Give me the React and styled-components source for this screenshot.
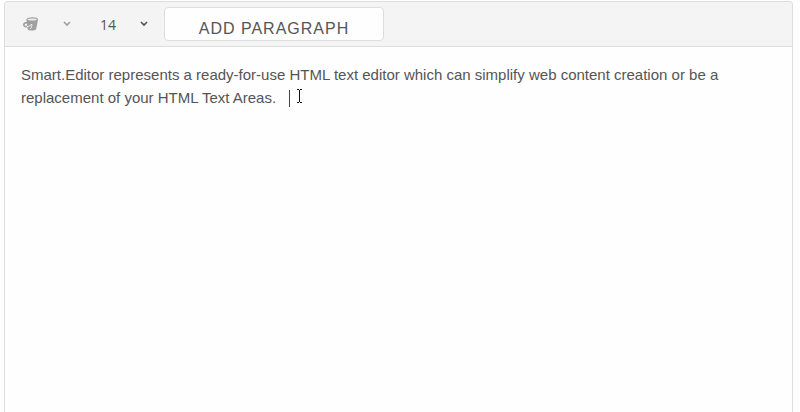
import { useState } from "react";
import styled, { createGlobalStyle } from "styled-components";

const GlobalStyles = createGlobalStyle`
  *,
  *::before,
  *::after {
    box-sizing: border-box;
    margin: 0;
  }

  body {
    background-color: #fefefe;
    color: #555;
    font-family: "Liberation Sans", Arial, sans-serif;
    font-size: 16px;
  }
`;

const Page = styled.main`
  display: flex;
  height: 100vh;
  padding: 1px 7px 0 4px;
`;

const Editor = styled.section`
  display: flex;
  flex-direction: column;
  flex: 1;
  border: 1px solid #ddd;
  border-bottom: none;
  border-radius: 4px 4px 0 0;
  overflow: hidden;
`;

const Toolbar = styled.div`
  display: flex;
  align-items: center;
  padding: 5px 16px;
  background-color: #f4f4f4;
  border-bottom: 1px solid #ddd;
`;

const ColorButton = styled.button`
  display: flex;
  align-items: center;
  justify-content: space-between;
  width: 52px;
  height: 34px;
  padding: 0 2px;
  border: none;
  background: none;
  color: #a0a0a0;
  cursor: pointer;
`;

const SizePicker = styled.label`
  display: flex;
  align-items: center;
  width: 50px;
  margin: 0 16px 0 25px;
  color: #555;
`;

const SizeSelect = styled.select`
  appearance: none;
  flex: 1;
  min-width: 0;
  height: 34px;
  padding: 0 2px;
  border: none;
  background: none;
  color: inherit;
  font-family: "Open Sans", sans-serif;
  font-size: 14px;
`;

const ParagraphButton = styled.button`
  width: 220px;
  height: 34px;
  padding: 9px 0 0;
  border: 1px solid #ddd;
  border-radius: 4px;
  background-color: #fefefe;
  color: #555;
  font-family: inherit;
  font-size: 16px;
  letter-spacing: 1px;
  text-transform: uppercase;
  cursor: pointer;
`;

const Content = styled.div`
  position: relative;
  display: flex;
  flex: 1;
`;

const TextArea = styled.textarea`
  flex: 1;
  padding: 16px;
  border: none;
  outline: none;
  resize: none;
  background: none;
  color: #555;
  font-family: inherit;
  font-size: 15px;
  line-height: 23px;
`;

const Caret = styled.span`
  position: absolute;
  top: 43px;
  left: 284px;
  width: 1px;
  height: 17px;
  background-color: #444;
`;

const Pointer = styled.svg`
  position: absolute;
  top: 42px;
  left: 291px;
  pointer-events: none;
`;

function PaintIcon() {
  return (
    <svg width="16" height="14" viewBox="0 0 16 14" aria-hidden="true">
      <path
        d="M3.500 2.500 4.500 12c1 2 7.500 2 8.700 0L15 2.500Z"
        fill="currentColor"
      />
      <ellipse
        cx="9.300"
        cy="2.500"
        rx="5.200"
        ry="1.600"
        fill="#ededed"
        stroke="currentColor"
        strokeWidth="1.200"
      />
      <path
        d="M4.500 5.700C1.500 5.500.5 7 1 8.500c.7 1.900 4.500 1.200 7-1.500"
        fill="none"
        stroke="currentColor"
        strokeWidth="1.700"
      />
      <path
        d="M4 9.600c2 0 3.500-1 4.700-2.600.4 2.200-.2 3.700-1.500 4.800"
        fill="none"
        stroke="#f4f4f4"
        strokeWidth="1"
      />
    </svg>
  );
}

function ChevronIcon() {
  return (
    <svg width="8" height="6" viewBox="0 0 8 6" aria-hidden="true">
      <path
        d="M1 1 4 4 7 1"
        fill="none"
        stroke="currentColor"
        strokeWidth="1.700"
      />
    </svg>
  );
}

const sizes = ["10", "12", "14", "16", "18", "24"];

function App() {
  const [size, setSize] = useState("14");
  const [text, setText] = useState(
    "Smart.Editor represents a ready-for-use HTML text editor which can simplify web content creation or be a replacement of your HTML Text Areas. "
  );

  return (
    <Page>
      <GlobalStyles />
      <Editor>
        <Toolbar role="toolbar">
          <ColorButton type="button" aria-label="Background color">
            <PaintIcon />
            <ChevronIcon />
          </ColorButton>
          <SizePicker>
            <SizeSelect
              aria-label="Font size"
              value={size}
              onChange={(e) => setSize(e.target.value)}
            >
              {sizes.map((item) => (
                <option key={item} value={item}>
                  {item}
                </option>
              ))}
            </SizeSelect>
            <ChevronIcon />
          </SizePicker>
          <ParagraphButton type="button">Add paragraph</ParagraphButton>
        </Toolbar>
        <Content>
          <TextArea
            aria-label="Editor content"
            spellCheck={false}
            value={text}
            onChange={(e) => setText(e.target.value)}
          />
          <Caret />
          <Pointer width="7" height="14" viewBox="0 0 7 14" aria-hidden="true">
            <path
              d="M1 .5h2M4 .5h2M3.500 1v12M1 13.500h2M4 13.500h2"
              fill="none"
              stroke="#111"
            />
          </Pointer>
        </Content>
      </Editor>
    </Page>
  );
}

export default App;
